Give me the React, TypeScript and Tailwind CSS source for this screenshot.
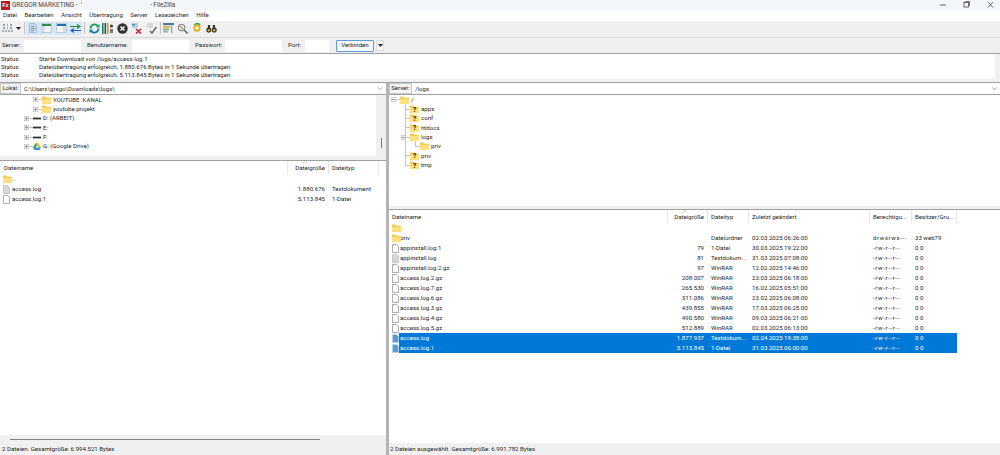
import React from "react";

const Folder = ({ q = false }: { q?: boolean }) => (
  <div className="relative w-[9px] h-[8px] shrink-0">
    <svg width="9" height="8" viewBox="0 0 9 8" className="block">
      <path d="M0 1 V8 H9 V1.8 H4.2 L3.4 .6 H.5 Z" fill="#f7c948" />
      <rect x="0" y="2.8" width="9" height="5.2" fill="#ffdf80" />
    </svg>
    {q && <span className="absolute left-[3px] top-[1.5px] text-[6.5px] font-bold text-[#111] leading-none">?</span>}
  </div>
);
const FileIcon = ({ kind = "white" }: { kind?: "white" | "gray" | "blue" }) => {
  const fill = kind === "white" ? "#fff" : kind === "gray" ? "#d6d6d6" : "#5b9bd5";
  const stroke = kind === "blue" ? "#bcd6ee" : kind === "gray" ? "#b0b0b0" : "#777";
  return (
    <svg width="7" height="9" viewBox="0 0 7 9" className="shrink-0">
      <path d="M.5.5 H4.6 L6.5 2.4 V8.5 H.5 Z" fill={fill} stroke={stroke} strokeWidth=".6" />
    </svg>
  );
};
const Plus = ({ minus = false }: { minus?: boolean }) => (
  <svg width="5" height="5" viewBox="0 0 5 5" className="shrink-0">
    <rect x=".25" y=".25" width="4.5" height="4.5" fill="#fff" stroke="#aaa" strokeWidth=".5" />
    <path d={minus ? "M1 2.5 H4" : "M1 2.5 H4 M2.5 1 V4"} stroke="#666" strokeWidth=".6" />
  </svg>
);
const Drive = () => (
  <svg width="8" height="5" viewBox="0 0 8 5" className="shrink-0">
    <rect x="0" y="1.6" width="8" height="1.8" fill="#333" />
  </svg>
);
const GDrive = () => (
  <svg width="8" height="7" viewBox="0 0 9 8" className="shrink-0">
    <path d="M3 0 H6 L9 5 H6 Z" fill="#fbbc04" />
    <path d="M3 0 L0 5 L1.5 8 L4.5 2.6 Z" fill="#1fa463" />
    <path d="M1.5 8 H7.5 L9 5 H3 Z" fill="#4285f4" />
  </svg>
);

const menu = ["Datei", "Bearbeiten", "Ansicht", "Übertragung", "Server", "Lesezeichen", "Hilfe"];

const remote: [string, "d" | "w" | "g" | "b", string, string, string, string, string, boolean][] = [
  ["..", "d", "", "", "", "", "", false],
  ["priv", "d", "", "Dateiordner", "02.03.2025 06:26:00", "drwxrwx---", "33 web79", false],
  ["appinstall.log.1", "w", "79", "1-Datei", "30.03.2025 19:22:00", "-rw-r--r--", "0 0", false],
  ["appinstall.log", "g", "81", "Textdokum...", "31.03.2025 07:08:00", "-rw-r--r--", "0 0", false],
  ["appinstall.log.2.gz", "w", "97", "WinRAR", "12.02.2025 14:46:00", "-rw-r--r--", "0 0", false],
  ["access.log.2.gz", "w", "208.007", "WinRAR", "23.03.2025 06:18:00", "-rw-r--r--", "0 0", false],
  ["access.log.7.gz", "w", "265.530", "WinRAR", "16.02.2025 05:51:00", "-rw-r--r--", "0 0", false],
  ["access.log.6.gz", "w", "311.086", "WinRAR", "23.02.2025 06:08:00", "-rw-r--r--", "0 0", false],
  ["access.log.3.gz", "w", "439.855", "WinRAR", "17.03.2025 06:25:00", "-rw-r--r--", "0 0", false],
  ["access.log.4.gz", "w", "490.580", "WinRAR", "09.03.2025 06:21:00", "-rw-r--r--", "0 0", false],
  ["access.log.5.gz", "w", "512.889", "WinRAR", "02.03.2025 06:13:00", "-rw-r--r--", "0 0", false],
  ["access.log", "b", "1.877.937", "Textdokum...", "02.04.2025 19:38:00", "-rw-r--r--", "0 0", true],
  ["access.log.1", "b", "5.113.845", "1-Datei", "31.03.2025 06:00:00", "-rw-r--r--", "0 0", true],
];

const Tool = ({ children, on = false, w = "w-[14px]" }: { children: React.ReactNode; on?: boolean; w?: string }) => (
  <div className={`${w} h-[13px] flex items-center justify-center shrink-0 ${on ? "bg-[#d5e8f8]" : ""}`}>{children}</div>
);
const Sep = ({ cls = "mx-[2px]" }: { cls?: string }) => <div className={`w-px h-[12px] bg-[#c4c4c4] shrink-0 ${cls}`} />;

const Toolbar = () => (
  <div className="h-[16px] flex items-center pl-[1px] pb-[2px] bg-[#f0f0f0] shrink-0">
    <Tool w="w-[13px]">
      <svg width="11" height="10" viewBox="0 0 11 10"><path d="M1 2h2M5 2h1M8 2h2M1 5h2M5 5h1M8 5h2" stroke="#6f8f9f" strokeWidth="1.3" /><path d="M0 8h11" stroke="#8a9aa0" strokeWidth="1.3" strokeDasharray="2 1" /></svg>
    </Tool>
    <Tool w="w-[9px]"><svg width="5" height="3" viewBox="0 0 5 3"><path d="M0 0H5L2.5 3Z" fill="#222" /></svg></Tool>
    <Sep cls="mx-[1px]" />
    <Tool on w="w-[13px]">
      <svg width="8" height="10" viewBox="0 0 8 10"><path d="M.5.5H5.5L7.5 2.5V9.5H.5Z" fill="#c8d8ee" stroke="#8fa4c0" strokeWidth=".6" /><path d="M2 3.5h3M2 5.5h4M2 7.5h3" stroke="#5a7f60" strokeWidth=".7" /></svg>
    </Tool>
    <Tool on w="w-[15px]">
      <svg width="11" height="10" viewBox="0 0 11 10"><rect x=".5" y=".5" width="10" height="9" fill="#f4f4f4" stroke="#a8b4bc" strokeWidth=".6" /><rect x="1" y="1" width="9" height="2" fill="#2f8a52" /><rect x="1" y="3" width="3" height="6" fill="#d5dde2" /></svg>
    </Tool>
    <Tool on w="w-[15px]">
      <svg width="11" height="10" viewBox="0 0 11 10"><rect x=".5" y=".5" width="10" height="9" fill="#f4f4f4" stroke="#a8b4bc" strokeWidth=".6" /><rect x="1" y="1" width="9" height="2" fill="#1e6fb5" /><rect x="7" y="3" width="3" height="6" fill="#d5dde2" /></svg>
    </Tool>
    <Tool on w="w-[13px]">
      <svg width="11" height="9" viewBox="0 0 11 9"><path d="M0 2.5H9M7 .5L10 2.5L7 4.5" stroke="#1f8a3f" strokeWidth="1.2" fill="none" /><path d="M11 6.5H2M4 4.5L1 6.5L4 8.5" stroke="#1d5fbf" strokeWidth="1.2" fill="none" /></svg>
    </Tool>
    <Sep cls="mx-[2px]" />
    <Tool w="w-[14px]">
      <svg width="11" height="11" viewBox="0 0 11 11"><path d="M1.5 5.5A4 4 0 0 1 9 3.5" stroke="#129a5c" strokeWidth="1.8" fill="none" /><path d="M9.5 5.5A4 4 0 0 1 2 7.5" stroke="#1577b8" strokeWidth="1.8" fill="none" /><path d="M10.5 1V4.5H7Z" fill="#129a5c" /><path d="M.5 10V6.5H4Z" fill="#1577b8" /></svg>
    </Tool>
    <Tool>
      <svg width="12" height="11" viewBox="0 0 12 11"><rect x="0" y="0" width="1.6" height="11" fill="#1f8a5f" /><rect x="2.5" y="0" width="1.6" height="11" fill="#3a4a55" /><rect x="5" y="0" width="1.6" height="11" fill="#c9a13a" /><circle cx="9.5" cy="3" r="1.6" fill="#444" /><path d="M8 6h3v4H8z" fill="#777" /></svg>
    </Tool>
    <Tool>
      <svg width="11" height="11" viewBox="0 0 11 11"><circle cx="5.5" cy="5.5" r="5.2" fill="#333" /><path d="M3.5 3.5L7.5 7.5M7.5 3.5L3.5 7.5" stroke="#fff" strokeWidth="1.4" /></svg>
    </Tool>
    <Tool w="w-[15px]">
      <svg width="11" height="11" viewBox="0 0 11 11"><rect x="1" y="0" width="6" height="5" fill="#b7cfe4" /><rect x="1" y="1" width="3" height="1.5" fill="#4b8cc4" /><path d="M5 6L10 10.5M10 6L5 10.5" stroke="#c8242c" strokeWidth="1.6" /></svg>
    </Tool>
    <Tool>
      <svg width="11" height="11" viewBox="0 0 11 11"><rect x="1" y="0" width="6" height="5" fill="#d8d8d8" /><path d="M4 8L6 10L10.5 4" stroke="#666" strokeWidth="1.5" fill="none" /></svg>
    </Tool>
    <Sep cls="ml-[2px]" />
    <Tool w="w-[14px]">
      <svg width="11" height="10" viewBox="0 0 11 10"><rect x="0" y="0" width="11" height="2.2" fill="#4a7c9c" /><rect x="0" y="3" width="7" height="1.8" fill="#e0b040" /><rect x="0" y="5.6" width="6" height="1.8" fill="#7bb06a" /><rect x="0" y="8" width="5" height="1.6" fill="#9db0d0" /><rect x="8" y="3" width="1.2" height="7" fill="#999" /></svg>
    </Tool>
    <Tool w="w-[15px]">
      <svg width="11" height="11" viewBox="0 0 12 12"><circle cx="5" cy="5" r="3.6" fill="#f5f5f5" stroke="#666" strokeWidth="1" /><path d="M8 8L11.5 11.5" stroke="#555" strokeWidth="1.5" /><path d="M3 3h2v2H3z" fill="#c66" /><path d="M5 5h2v2H5z" fill="#6a6" /></svg>
    </Tool>
    <Tool w="w-[14px]">
      <svg width="10" height="10" viewBox="0 0 11 11"><circle cx="5.5" cy="5.5" r="3" fill="none" stroke="#e8b020" strokeWidth="2" /><path d="M2.5 2A4.5 4.5 0 0 1 9 2" stroke="#2ca24a" strokeWidth="1.4" fill="none" /></svg>
    </Tool>
    <Tool w="w-[14px]">
      <svg width="11" height="9" viewBox="0 0 12 10"><circle cx="3" cy="6.8" r="2.8" fill="#2c2c2c" /><circle cx="9" cy="6.8" r="2.8" fill="#2c2c2c" /><circle cx="3" cy="7" r="1.4" fill="#e2a928" /><circle cx="9" cy="7" r="1.4" fill="#e2a928" /><path d="M2 1h2.5v4H2zM7.5 1H10v4H7.5z" fill="#333" /></svg>
    </Tool>
  </div>
);

const QInput = ({ w }: { w: string }) => <div className={`${w} h-[12px] bg-white shrink-0`} />;

const Quick = () => (
  <div className="h-[15px] flex items-center bg-[#f0f0f0] pl-[2px] shrink-0">
    <span className="w-[22px]">Server:</span>
    <QInput w="w-[57px]" />
    <span className="ml-[6px] w-[45px]">Benutzername:</span>
    <QInput w="w-[57px]" />
    <span className="ml-[6px] w-[30px]">Passwort:</span>
    <QInput w="w-[57px]" />
    <span className="ml-[6px] w-[17px]">Port:</span>
    <QInput w="w-[24px]" />
    <div className="ml-[7px] w-[38px] h-[12px] flex items-center justify-center bg-[#f7f7f7] border border-[#5a9bd8] rounded-[1px]">Verbinden</div>
    <div className="ml-[2px] w-[8px] h-[11px] flex items-center justify-center bg-[#fbfbfb] border border-[#dcdcdc]">
      <svg width="5" height="3" viewBox="0 0 5 3"><path d="M0 0H5L2.5 3Z" fill="#222" /></svg>
    </div>
  </div>
);

const PathBar = ({ label, w, path }: { label: string; w: string; path: string }) => (
  <div className="h-[12px] flex items-stretch border-b border-[#a0a0a0] shrink-0">
    <div className={`${w} flex items-center justify-center bg-[#f3f3f3] border border-[#c8c8c8] shrink-0`}>{label}</div>
    <div className="flex-1 flex items-center pl-[3px] bg-white pt-px">
      <span>{path}</span>
    </div>
    <div className="w-[8px] bg-white flex items-center">
      <svg width="5" height="3" viewBox="0 0 5 3"><path d="M.3.3L2.5 2.6L4.7.3" stroke="#666" strokeWidth=".5" fill="none" /></svg>
    </div>
  </div>
);

const Tree = ({ indent, box, minus, icon, label }: { indent: number; box?: boolean; minus?: boolean; icon: React.ReactNode; label: string }) => (
  <div className="h-[9.35px] flex items-center shrink-0" style={{ paddingLeft: indent }}>
    <div className="w-[9px] flex items-center shrink-0">
      {box ? <Plus minus={minus} /> : <div className="ml-[4px] w-[5px] h-px bg-[#c4c4c4]" />}
      {box && <div className="w-[4px] h-px bg-[#c4c4c4]" />}
    </div>
    {icon}
    <span className="ml-[2px] whitespace-pre">{label}</span>
  </div>
);

const Hd = ({ w, t, right, sort, pad = "px-[3px]" }: { w: string; t: string; right?: boolean; sort?: boolean; pad?: string }) => (
  <div className={`${w} h-full relative flex items-center pt-[1px] ${pad} border-r border-[#e5e5e5] shrink-0 ${right ? "justify-end" : ""}`}>
    {sort && (
      <svg width="5" height="3" viewBox="0 0 5 3" className="absolute top-0 left-[14px]"><path d="M.3 2.7L2.5.3L4.7 2.7" stroke="#999" strokeWidth=".5" fill="none" /></svg>
    )}
    <span className="whitespace-nowrap">{t}</span>
  </div>
);

const Local = () => (
  <div className="w-[386px] flex flex-col shrink-0 bg-[#f0f0f0]">
    <PathBar label="Lokal:" w="w-[21px]" path="C:\Users\grego\Downloads\logs\" />
    <div className="h-[61px] bg-white flex shrink-0 overflow-hidden">
      <div className="flex-1 flex flex-col overflow-hidden">
        <Tree indent={33} box icon={<Folder />} label="YOUTUBE  KANAL" />
        <Tree indent={33} box icon={<Folder />} label="youtube projekt" />
        <Tree indent={24} box icon={<Drive />} label="D: (ARBEIT)" />
        <Tree indent={24} box icon={<Drive />} label="E:" />
        <Tree indent={24} box icon={<Drive />} label="F:" />
        <Tree indent={24} box icon={<GDrive />} label="G: (Google Drive)" />
      </div>
      <div className="w-[10px] bg-[#f0f0f0] flex justify-center pt-[43px] shrink-0">
        <div className="w-px h-[10px] bg-[#777]" />
      </div>
    </div>
    <div className="h-[4px] shrink-0" />
    <div className="h-px bg-[#a0a0a0] shrink-0" />
    <div className="flex-1 bg-white flex flex-col">
      <div className="h-[13px] flex shrink-0">
        <Hd w="w-[288px]" t="Dateiname" pad="pl-[4px]" />
        <Hd w="w-[41px]" t="Dateigröße" right sort />
        <Hd w="w-[50px]" t="Dateityp" />
      </div>
      {[
        { n: "..", icon: <Folder />, s: "", t: "" },
        { n: "access.log", icon: <FileIcon kind="gray" />, s: "1.880.676", t: "Textdokument" },
        { n: "access.log.1", icon: <FileIcon />, s: "5.113.845", t: "1-Datei" },
      ].map((r) => (
        <div key={r.n} className="h-[10px] flex items-center shrink-0">
          <div className="w-[287px] flex items-center pl-[3px]">
            <div className="w-[9px] flex justify-start">{r.icon}</div>
            <span>{r.n}</span>
          </div>
          <div className="w-[38px] text-right">{r.s}</div>
          <div className="ml-[7px]">{r.t}</div>
        </div>
      ))}
      <div className="flex-1" />
      <div className="h-[8px] bg-[#f0f0f0] flex items-center pl-[10px] shrink-0">
        <div className="w-[310px] h-[1px] bg-[#808080]" />
      </div>
    </div>
    <div className="h-[12px] flex items-center pl-[2px] bg-[#f0f0f0] shrink-0">2 Dateien. Gesamtgröße: 6.994.521 Bytes</div>
  </div>
);

const Remote = () => (
  <div className="flex-1 flex flex-col bg-[#f0f0f0] min-w-0">
    <PathBar label="Server:" w="w-[23px]" path="/logs" />
    <div className="h-[111px] bg-white flex flex-col pl-[2px] shrink-0 relative">
      <div className="absolute left-[16px] top-[4px] w-px h-[66px] bg-[#c4c4c4]" />
      <div className="absolute left-[26px] top-[42px] w-px h-[9px] bg-[#c4c4c4]" />
      <Tree indent={0} box minus icon={<Folder />} label="/" />
      <Tree indent={10} icon={<Folder q />} label="apps" />
      <Tree indent={10} icon={<Folder q />} label="conf" />
      <Tree indent={10} icon={<Folder q />} label="htdocs" />
      <Tree indent={10} box minus icon={<Folder />} label="logs" />
      <Tree indent={20} icon={<Folder />} label="priv" />
      <Tree indent={10} icon={<Folder q />} label="priv" />
      <Tree indent={10} icon={<Folder q />} label="tmp" />
    </div>
    <div className="h-[3px] shrink-0" />
    <div className="h-px bg-[#a0a0a0] shrink-0" />
    <div className="flex-1 bg-white flex flex-col pl-[2px]">
      <div className="h-[13px] flex shrink-0">
        <Hd w="w-[277px]" t="Dateiname" pad="pl-[1px]" />
        <Hd w="w-[40px]" t="Dateigröße" right sort />
        <Hd w="w-[41px]" t="Dateityp" />
        <Hd w="w-[121px]" t="Zuletzt geändert" />
        <Hd w="w-[42px]" t="Berechtigu..." />
        <Hd w="w-[45px]" t="Besitzer/Gru..." />
      </div>
      {remote.map((r, i) => (
        <div key={i} className="h-[10px] flex items-center shrink-0">
          <div className="w-[8px] flex justify-start pl-[1px] shrink-0">
            {r[1] === "d" ? <Folder /> : <FileIcon kind={r[1] === "g" ? "gray" : r[1] === "b" ? "blue" : "white"} />}
          </div>
          <div className={`flex items-center h-full w-[558px] pl-px ${r[7] ? "bg-[#0078d7] text-white" : ""}`}>
            <div className="w-[270px]">{r[0]}</div>
            <div className="w-[34px] text-right">{r[2]}</div>
            <div className="w-[48px] pl-[7px] whitespace-nowrap">{r[3]}</div>
            <div className="w-[121px] whitespace-nowrap">{r[4]}</div>
            <div className="w-[42px] tracking-[0.6px] whitespace-nowrap">{r[5]}</div>
            <div>{r[6]}</div>
          </div>
        </div>
      ))}
    </div>
    <div className="h-[12px] flex items-center pl-[1px] bg-[#f0f0f0] shrink-0">2 Dateien ausgewählt. Gesamtgröße: 6.991.782 Bytes</div>
  </div>
);

export default function App() {
  return (
    <div className="w-[1000px] h-[455px] flex flex-col overflow-hidden bg-[#f0f0f0] text-[#262626] text-[6.1px] leading-none" style={{ fontFamily: 'Roboto, "Noto Sans", sans-serif' }}>
      <div className="h-[10px] flex items-center bg-[#f3f6fb] shrink-0 relative">
        <div className="w-[9px] h-[9px] ml-[1px] bg-[#b81d1d] flex items-center justify-center text-white text-[6px] font-bold">Fz</div>
        <span className="ml-[2px] text-[6.4px] text-[#444] w-[138px] whitespace-pre">GREGOR MARKETING -  '</span>
        <span className="text-[6.4px] text-[#444]">- FileZilla</span>
        <div className="ml-auto flex items-center text-[#444]">
          <svg width="60" height="8" viewBox="0 0 60 8">
            <path d="M0 4H6" stroke="#444" strokeWidth=".8" />
            <rect x="24" y="1.5" width="4.5" height="4.5" fill="none" stroke="#444" strokeWidth=".8" />
            <path d="M25.5 1V.5H29.5V4.5H29" stroke="#444" strokeWidth=".7" fill="none" />
            <path d="M48 1L53 6.5M53 1L48 6.5" stroke="#444" strokeWidth=".8" />
          </svg>
        </div>
      </div>
      <div className="h-[11px] flex items-center bg-white pl-[3px] gap-[7.5px] shrink-0">
        {menu.map((m) => <span key={m}>{m}</span>)}
      </div>
      <Toolbar />
      <div className="h-px bg-[#dadada] shrink-0" />
      <Quick />
      <div className="h-px bg-[#a0a0a0] shrink-0" />
      <div className="h-[25px] bg-white flex shrink-0">
        <div className="flex-1 flex flex-col justify-center gap-[1.5px] pt-[2px]">
          {[
            "Starte Download von /logs/access.log.1",
            "Dateiübertragung erfolgreich, 1.880.676 Bytes in 1 Sekunde übertragen",
            "Dateiübertragung erfolgreich, 5.113.845 Bytes in 1 Sekunde übertragen",
          ].map((t) => (
            <div key={t} className="flex h-[6.5px] items-center pl-[1px]">
              <span className="w-[38px] shrink-0">Status:</span>
              <span>{t}</span>
            </div>
          ))}
        </div>
        <div className="w-[5px] bg-[#f0f0f0]" />
      </div>
      <div className="h-[3px] bg-[#f0f0f0] shrink-0" />
      <div className="h-px bg-[#a0a0a0] shrink-0" />
      <div className="flex-1 flex min-h-0">
        <Local />
        <div className="w-[3px] bg-[#b4b4b4] shrink-0" />
        <Remote />
      </div>
    </div>
  );
}
